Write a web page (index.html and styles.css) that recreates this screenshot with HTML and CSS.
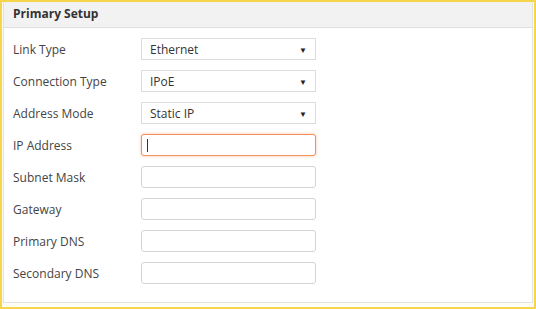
FILE: index.html
```html
<!DOCTYPE html>
<html>
<head>
<meta charset="utf-8">
<link rel="stylesheet" href="styles.css">
</head>
<body>
<div class="frame">
  <div class="panel">
    <div class="panel-head">Primary Setup</div>
    <div class="panel-body">
      <div class="row"><label>Link Type</label><div class="select"><span>Ethernet</span><span class="caret">&#9660;</span></div></div>
      <div class="row"><label>Connection Type</label><div class="select"><span>IPoE</span><span class="caret">&#9660;</span></div></div>
      <div class="row"><label>Address Mode</label><div class="select"><span>Static IP</span><span class="caret">&#9660;</span></div></div>
      <div class="row"><label>IP Address</label><div class="input focus"><span class="cursor"></span></div></div>
      <div class="row"><label>Subnet Mask</label><div class="input"></div></div>
      <div class="row"><label>Gateway</label><div class="input"></div></div>
      <div class="row"><label>Primary DNS</label><div class="input"></div></div>
      <div class="row"><label>Secondary DNS</label><div class="input"></div></div>
    </div>
  </div>
</div>
</body>
</html>
```

FILE: styles.css
```css
html, body {
  margin: 0;
  padding: 0;
  background: #fff;
}
body {
  font-family: "Open Sans", "Noto Sans", sans-serif;
  font-size: 12px;
  color: #444;
}
.frame {
  width: 536px;
  height: 309px;
  box-sizing: border-box;
  border: 2px solid #f6d54c;
  padding: 0 1px 4px 1px;
  background: #fffdf3;
}
.panel {
  height: 100%;
  box-sizing: border-box;
  border: 1px solid #e2e2e2;
  border-top: none;
  background: #fff;
}
.panel-head {
  height: 25px;
  background: #f2f2f2;
  border-bottom: 1px solid #dedede;
  font-weight: bold;
  color: #333;
  padding-left: 9px;
  line-height: 24px;
}
.panel-body {
  padding: 10px 0 0 9px;
  display: flex;
  flex-direction: column;
  gap: 10px;
}
.row {
  display: flex;
  align-items: center;
  height: 22px;
}
.row label {
  width: 128px;
}
.select, .input {
  width: 175px;
  height: 22px;
  box-sizing: border-box;
  border: 1px solid #d4d4d4;
  border-radius: 3px;
  background: #fff;
  display: flex;
  align-items: center;
  padding: 0 8px 0 8px;
}
.select {
  justify-content: space-between;
  border-radius: 0;
  color: #333;
  border-color: #dcdcdc;
}
.caret {
  font-size: 8px;
  color: #222;
}
.input.focus {
  border-color: #f0915a;
  box-shadow: 0 0 3px rgba(240, 130, 70, 0.5);
  padding-left: 5px;
}
.cursor {
  width: 1px;
  height: 13px;
  background: #333;
}
```
